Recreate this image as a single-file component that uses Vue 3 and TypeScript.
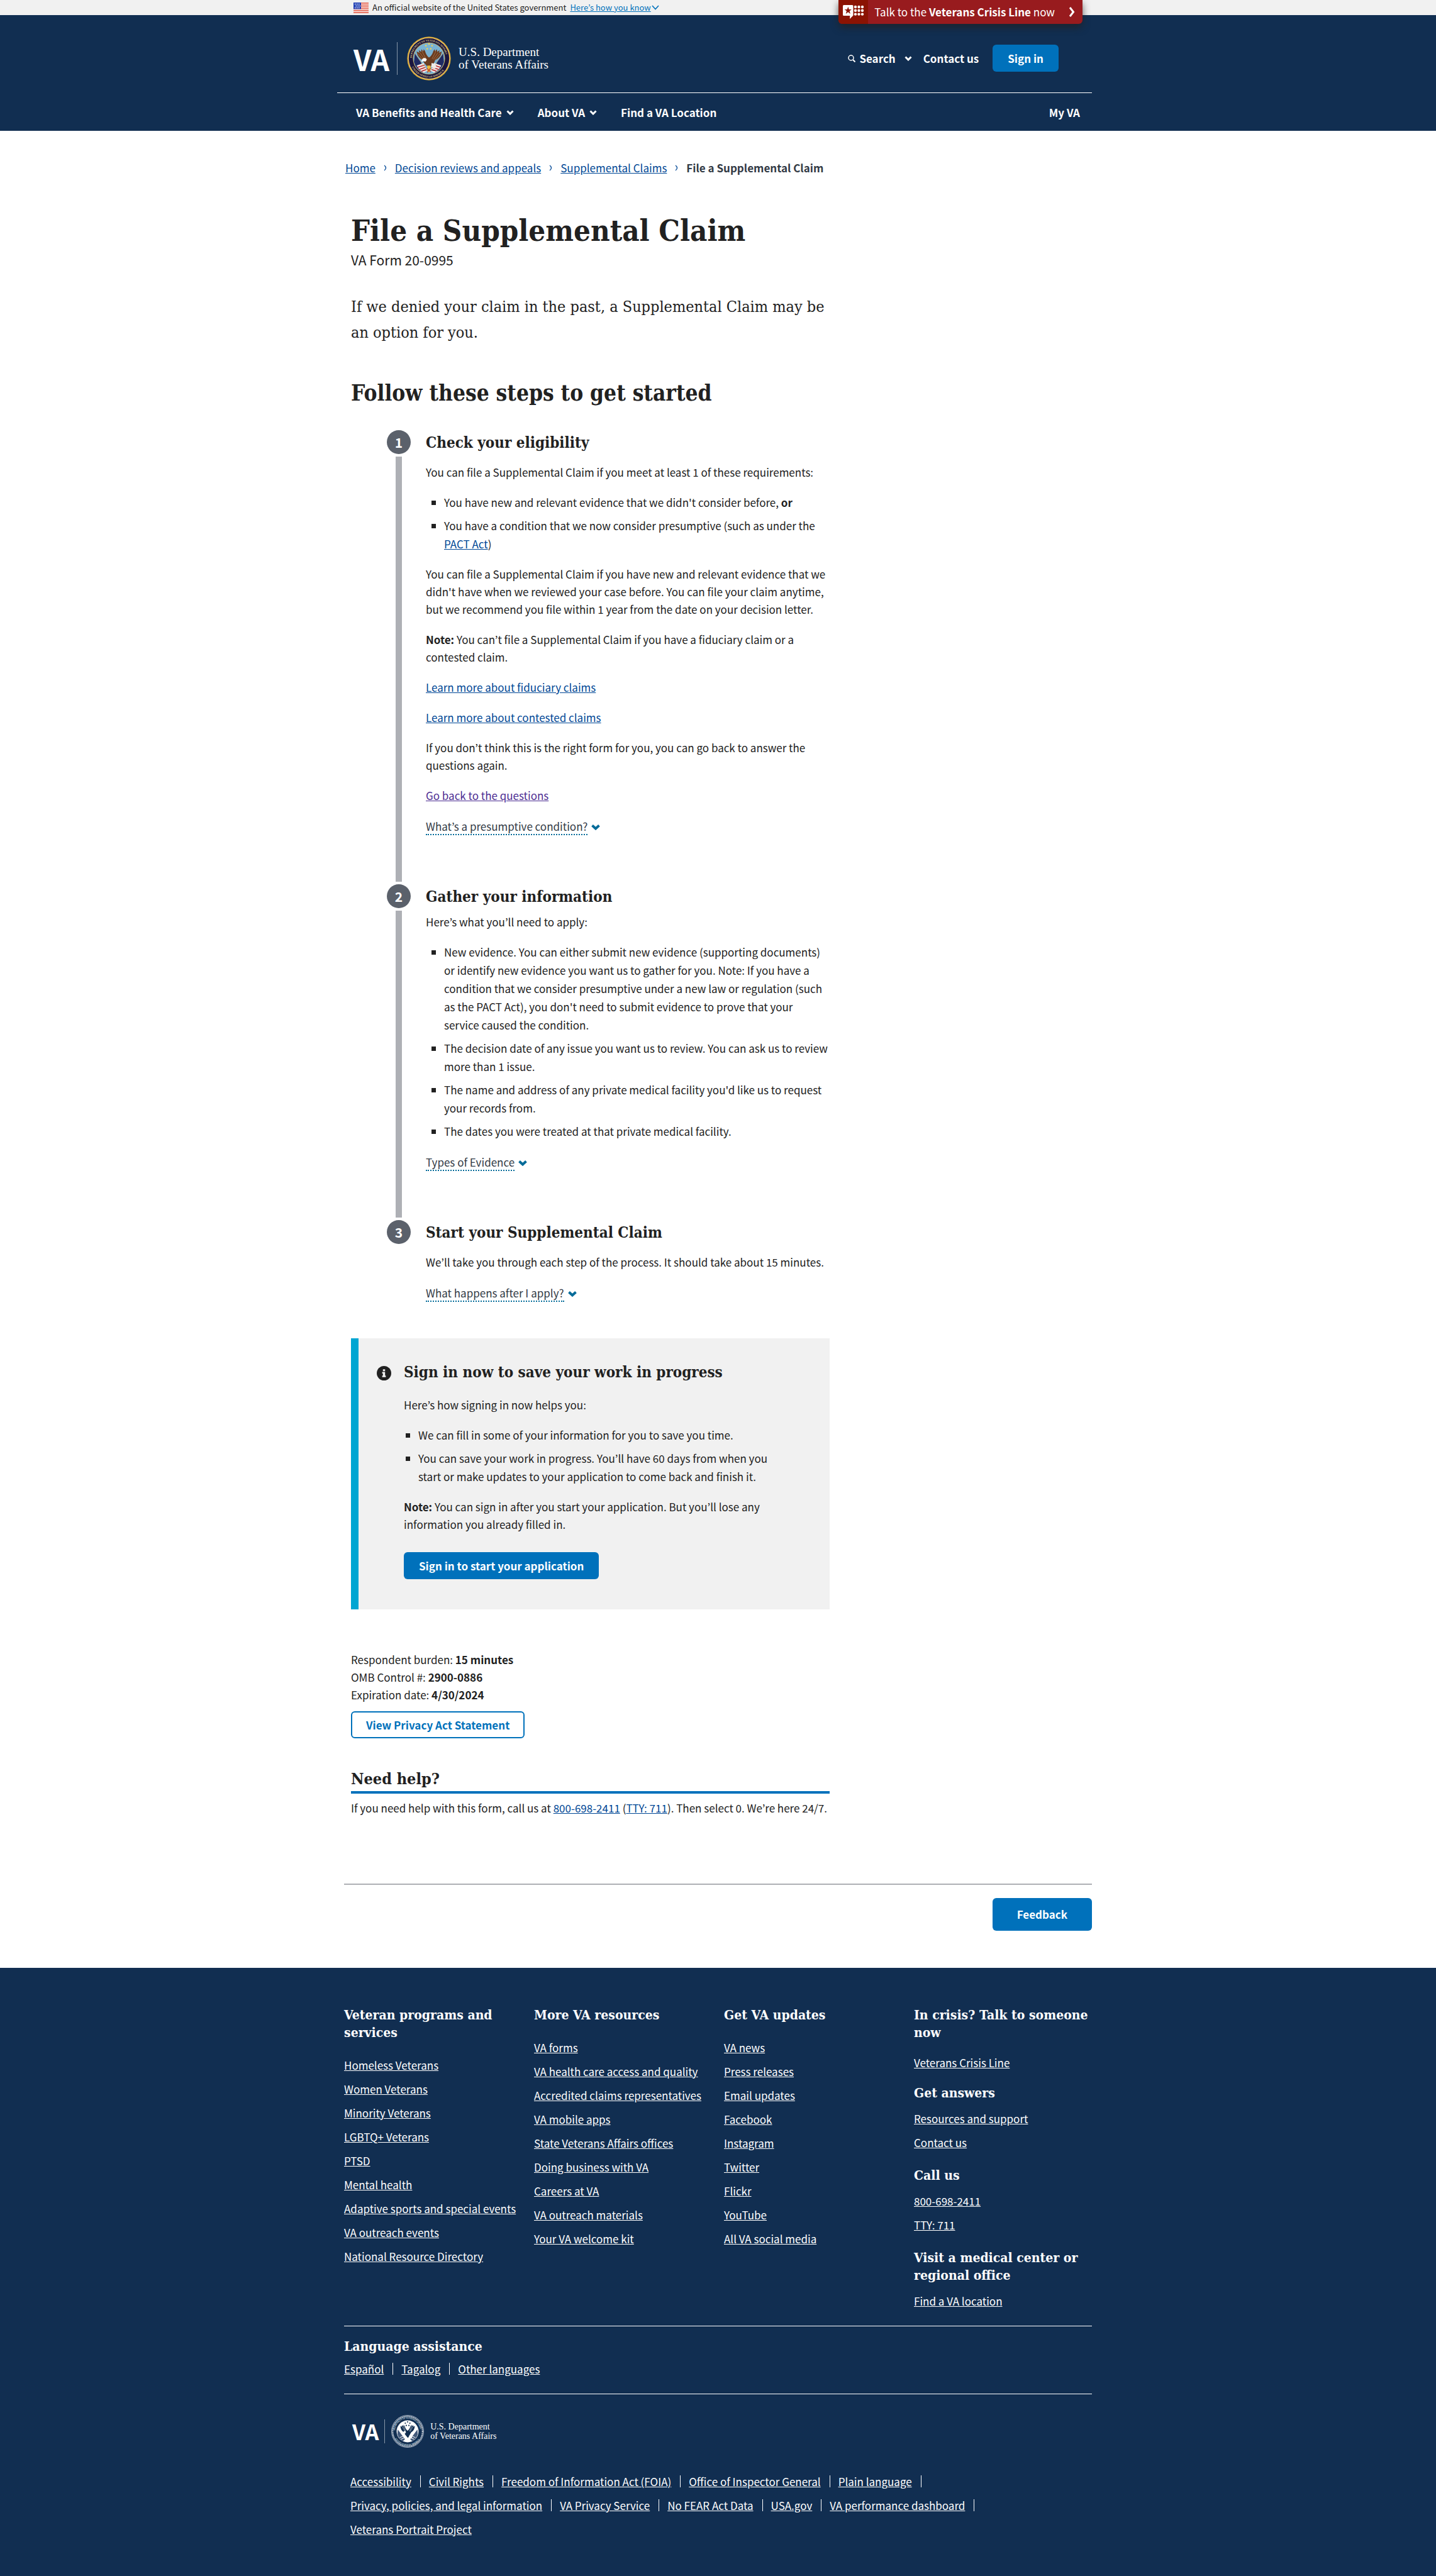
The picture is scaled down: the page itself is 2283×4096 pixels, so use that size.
<script setup lang="ts">
interface FooterGroup {
  title: string
  links: string[]
}

const navItems = [
  { label: 'VA Benefits and Health Care', menu: true },
  { label: 'About VA', menu: true },
  { label: 'Find a VA Location', menu: false },
]

const crumbs = ['Home', 'Decision reviews and appeals', 'Supplemental Claims']

const evidence = [
  'New evidence. You can either submit new evidence (supporting documents) or identify new evidence you want us to gather for you. Note: If you have a condition that we consider presumptive under a new law or regulation (such as the PACT Act), you don\'t need to submit evidence to prove that your service caused the condition.',
  'The decision date of any issue you want us to review. You can ask us to review more than 1 issue.',
  'The name and address of any private medical facility you\'d like us to request your records from.',
  'The dates you were treated at that private medical facility.',
]

const footerColumns: FooterGroup[][] = [
  [
    {
      title: 'Veteran programs and services',
      links: [
        'Homeless Veterans',
        'Women Veterans',
        'Minority Veterans',
        'LGBTQ+ Veterans',
        'PTSD',
        'Mental health',
        'Adaptive sports and special events',
        'VA outreach events',
        'National Resource Directory',
      ],
    },
  ],
  [
    {
      title: 'More VA resources',
      links: [
        'VA forms',
        'VA health care access and quality',
        'Accredited claims representatives',
        'VA mobile apps',
        'State Veterans Affairs offices',
        'Doing business with VA',
        'Careers at VA',
        'VA outreach materials',
        'Your VA welcome kit',
      ],
    },
  ],
  [
    {
      title: 'Get VA updates',
      links: [
        'VA news',
        'Press releases',
        'Email updates',
        'Facebook',
        'Instagram',
        'Twitter',
        'Flickr',
        'YouTube',
        'All VA social media',
      ],
    },
  ],
  [
    { title: 'In crisis? Talk to someone now', links: ['Veterans Crisis Line'] },
    { title: 'Get answers', links: ['Resources and support', 'Contact us'] },
    { title: 'Call us', links: ['800-698-2411', 'TTY: 711'] },
    { title: 'Visit a medical center or regional office', links: ['Find a VA location'] },
  ],
]

const languages = ['Español', 'Tagalog', 'Other languages']

const legalLinks = [
  'Accessibility',
  'Civil Rights',
  'Freedom of Information Act (FOIA)',
  'Office of Inspector General',
  'Plain language',
  'Privacy, policies, and legal information',
  'VA Privacy Service',
  'No FEAR Act Data',
  'USA.gov',
  'VA performance dashboard',
  'Veterans Portrait Project',
]

const stars = [[50, 17], [43, 21], [57, 21], [46, 28], [54, 28]]
const dots = [0, 1, 2, 3, 4, 5, 6, 7, 8]
</script>

<template>
  <div class="page">
    <div class="banner">
      <div class="shell banner-row">
        <svg class="flag" viewBox="0 0 24 17" aria-hidden="true">
          <rect width="24" height="17" fill="#fff" />
          <path d="M0 1h24M0 4h24M0 7h24M0 10h24M0 13h24M0 16h24" stroke="#e0452f" stroke-width="1.5" />
          <rect width="12" height="10.5" fill="#2140b5" />
          <path d="M2 2.5h9M3.5 5.5h8M2 8.5h9" stroke="#fff" stroke-width="1.5" stroke-dasharray="1.5 1.5" />
        </svg>
        <span>An official website of the United States government</span>
        <button type="button" class="how">
          <u>Here’s how you know</u>
          <svg viewBox="0 0 12 8" width="12" height="8" aria-hidden="true"><path d="M1 1l5 5.500L11 1" fill="none" stroke="currentColor" stroke-width="1.6" /></svg>
        </button>
        <a href="#crisis" class="crisis">
          <span class="crisis-icon">
            <svg viewBox="0 0 34 22" width="34" height="22" aria-hidden="true">
              <path d="M1.5 0H15a1.5 1.5 0 0 1 1.5 1.5v14.5a1.5 1.5 0 0 1-1 1.5L11 22l.3-5H1.5A1.5 1.5 0 0 1 0 15.5v-14A1.5 1.5 0 0 1 1.5 0z" fill="#fff" />
              <path d="M8.3 2.8l1.5 4.2h4.2l-3.4 2.6 1.3 4.3-3.6-2.6-3.6 2.6L6 9.6 2.6 7h4.2z" fill="#8b1303" />
              <circle v-for="d in dots" :key="d" :cx="20 + (d % 3) * 5.5" :cy="3 + Math.floor(d / 3) * 5.8" r="2.2" fill="#fff" />
            </svg>
          </span>
          <span class="crisis-text">Talk to the <b>Veterans Crisis Line</b> now</span>
          <svg viewBox="0 0 10 16" width="10" height="16" aria-hidden="true"><path d="M2 1l5.500 7L2 15" fill="none" stroke="#fff" stroke-width="3" /></svg>
        </a>
      </div>
    </div>

    <header class="header">
      <div class="header-shell">
        <div class="brand-row">
          <a href="#home" class="logo" aria-label="VA home">
            <span class="va">VA</span>
            <span class="rule"></span>
            <svg class="seal" viewBox="0 0 100 100" aria-hidden="true">
              <defs>
                <path id="ring-top" d="M11 50a39 39 0 0 1 78 0" />
                <path id="ring-bottom" d="M6.5 50a43.5 43.5 0 0 0 87 0" />
              </defs>
              <circle cx="50" cy="50" r="49.5" fill="#d9a93a" />
              <circle cx="50" cy="50" r="47" fill="#f1d27a" />
              <circle cx="50" cy="50" r="46" fill="#1b1640" />
              <circle cx="50" cy="50" r="36.5" fill="#d9a93a" />
              <circle cx="50" cy="50" r="35.5" fill="#79b2d3" />
              <text class="ring"><textPath href="#ring-top" startOffset="1">DEPARTMENT OF VETERANS AFFAIRS</textPath></text>
              <text class="ring"><textPath href="#ring-bottom" startOffset="20">UNITED STATES OF AMERICA</textPath></text>
              <path d="M18 38L42 73l-5 9A35 35 0 0 1 16 58z" fill="#1f2a63" />
              <path d="M82 38L58 73l5 9A35 35 0 0 0 84 58z" fill="#1f2a63" />
              <path d="M22 66l16-6 8 18-8 4c-7-3-12-8-16-16zM78 66l-16-6-8 18 8 4c7-3 12-8 16-16z" fill="#f3e9e6" />
              <path d="M24 70l16-5M28 75l14-5M33 79l11-4M76 70l-16-5M72 75l-14-5M67 79l-11-4" stroke="#b9282e" stroke-width="2.4" />
              <path d="M18 38l24 35M82 38L58 73" stroke="#d9c07a" stroke-width="1" />
              <path d="M50 48c-4-3-7-8-9-15l-3-4-1 5-4-5-1 6-5-4 1 6-6-3c1 9 6 16 14 20l3 6 8 9 3 1 4-1 8-10 2-5c9-4 14-11 15-20l-6 3 1-6-5 4-1-6-4 5-1-5-3 4c-2 7-5 12-10 15z" fill="#6b3c20" />
              <path d="M29 36l11 16M34 33l9 18M24 38l13 16M71 36L60 52M66 33l-9 18M76 38L63 54" stroke="#a8754a" stroke-width="1.2" />
              <path d="M36 50c4-2 8-1 9 3l-3 4-5-1-4 2c0-3 1-6 3-8z" fill="#fff" />
              <path d="M56 60l8 3 4 8-6 2-7-4z" fill="#efece8" />
              <path d="M46 66h7l2 7-4 9-5-3z" fill="#e9bd3c" />
              <path d="M45 72l9 9M54 71l-8 11" stroke="#b9282e" stroke-width="1.5" />
              <circle v-for="(s, i) in stars" :key="i" :cx="s[0]" :cy="s[1]" r="2" fill="#e6cf5d" />
            </svg>
            <span class="dept">U.S. Department<br />of Veterans Affairs</span>
          </a>
          <div class="tools">
            <button type="button" class="tool">
              <svg viewBox="0 0 12 12" width="12" height="12" aria-hidden="true"><circle cx="5" cy="5" r="4" fill="none" stroke="#fff" stroke-width="1.5" /><path d="M8 8l3.500 3.500" stroke="#fff" stroke-width="2" /></svg>
              <span class="search-label">Search</span>
              <svg class="chev" viewBox="0 0 12 8" aria-hidden="true"><path d="M1.5 1.5L6 6l4.5-4.5" /></svg>
            </button>
            <a href="#contact" class="contact">Contact us</a>
            <button type="button" class="btn">Sign in</button>
          </div>
        </div>
        <nav class="nav" aria-label="Primary">
          <template v-for="item in navItems" :key="item.label">
            <button v-if="item.menu" type="button">
              {{ item.label }}
              <svg class="chev" viewBox="0 0 12 8" aria-hidden="true"><path d="M1.5 1.5L6 6l4.5-4.5" /></svg>
            </button>
            <a v-else href="#find">{{ item.label }}</a>
          </template>
          <a href="#my-va" class="my-va">My VA</a>
        </nav>
      </div>
    </header>

    <main class="shell">
      <nav class="crumbs" aria-label="Breadcrumb">
        <template v-for="crumb in crumbs" :key="crumb">
          <a href="#crumb">{{ crumb }}</a>
          <svg viewBox="0 0 5 10" width="5" height="10" aria-hidden="true"><path d="M1 1c2 1.500 2.500 3 2.500 4S3 7.500 1 9" fill="none" stroke="#004795" stroke-width="1.3" /></svg>
        </template>
        <strong>File a Supplemental Claim</strong>
      </nav>

      <article class="content">
        <h1>File a Supplemental Claim</h1>
        <p class="form-no">VA Form 20-0995</p>
        <p class="intro">If we denied your claim in the past, a Supplemental Claim may be an option for you.</p>
        <h2>Follow these steps to get started</h2>

        <ol class="steps">
          <li class="step">
            <div class="marker"><span class="num">1</span><span class="bar"></span></div>
            <div class="body">
              <h3>Check your eligibility</h3>
              <p>You can file a Supplemental Claim if you meet at least 1 of these requirements:</p>
              <ul>
                <li>You have new and relevant evidence that we didn't consider before, <b>or</b></li>
                <li>You have a condition that we now consider presumptive (such as under the <a href="#pact">PACT Act</a>)</li>
              </ul>
              <p>You can file a Supplemental Claim if you have new and relevant evidence that we didn't have when we reviewed your case before. You can file your claim anytime, but we recommend you file within 1 year from the date on your decision letter.</p>
              <p><b>Note:</b> You can’t file a Supplemental Claim if you have a fiduciary claim or a contested claim.</p>
              <p><a href="#fiduciary">Learn more about fiduciary claims</a></p>
              <p><a href="#contested">Learn more about contested claims</a></p>
              <p>If you don’t think this is the right form for you, you can go back to answer the questions again.</p>
              <p><a href="#questions" class="visited">Go back to the questions</a></p>
              <button type="button" class="expand">
                <span>What’s a presumptive condition?</span>
                <svg viewBox="0 0 14 9" width="14" height="9" aria-hidden="true"><path d="M1.5 1.5L7 6.5l5.5-5" /></svg>
              </button>
            </div>
          </li>
          <li class="step">
            <div class="marker"><span class="num">2</span><span class="bar"></span></div>
            <div class="body tight">
              <h3>Gather your information</h3>
              <p>Here’s what you’ll need to apply:</p>
              <ul>
                <li v-for="line in evidence" :key="line">{{ line }}</li>
              </ul>
              <button type="button" class="expand">
                <span>Types of Evidence</span>
                <svg viewBox="0 0 14 9" width="14" height="9" aria-hidden="true"><path d="M1.5 1.5L7 6.5l5.5-5" /></svg>
              </button>
            </div>
          </li>
          <li class="step">
            <div class="marker"><span class="num">3</span></div>
            <div class="body last">
              <h3>Start your Supplemental Claim</h3>
              <p>We’ll take you through each step of the process. It should take about 15 minutes.</p>
              <button type="button" class="expand">
                <span>What happens after I apply?</span>
                <svg viewBox="0 0 14 9" width="14" height="9" aria-hidden="true"><path d="M1.5 1.5L7 6.5l5.5-5" /></svg>
              </button>
            </div>
          </li>
        </ol>

        <section class="alert">
          <svg class="info" viewBox="0 0 24 24" aria-hidden="true">
            <circle cx="12" cy="12" r="12" fill="#212121" />
            <path d="M10.2 5.5h3.6v3h-3.6zM9 10h4.8v6H15v2.500H9V16h1.200v-3.500H9z" fill="#f1f1f1" />
          </svg>
          <div>
            <h3>Sign in now to save your work in progress</h3>
            <p>Here’s how signing in now helps you:</p>
            <ul>
              <li>We can fill in some of your information for you to save you time.</li>
              <li>You can save your work in progress. You’ll have 60 days from when you start or make updates to your application to come back and finish it.</li>
            </ul>
            <p><b>Note:</b> You can sign in after you start your application. But you’ll lose any information you already filled in.</p>
            <button type="button" class="btn start">Sign in to start your application</button>
          </div>
        </section>

        <div class="omb">
          <div>Respondent burden: <b>15 minutes</b></div>
          <div>OMB Control #: <b>2900-0886</b></div>
          <div>Expiration date: <b>4/30/2024</b></div>
          <button type="button" class="btn outline">View Privacy Act Statement</button>
        </div>

        <h2 class="help">Need help?</h2>
        <p class="help-text">If you need help with this form, call us at <a href="tel:8006982411">800-698-2411</a> (<a href="tel:711">TTY: 711</a>). Then select 0. We’re here 24/7.</p>
      </article>

      <div class="feedback">
        <button type="button" class="btn large">Feedback</button>
      </div>
    </main>

    <footer class="footer">
      <div class="shell">
        <div class="columns">
          <div v-for="(column, i) in footerColumns" :key="i" class="column">
            <section v-for="group in column" :key="group.title">
              <h2>{{ group.title }}</h2>
              <ul>
                <li v-for="link in group.links" :key="link"><a href="#footer">{{ link }}</a></li>
              </ul>
            </section>
          </div>
        </div>

        <section class="language">
          <h2>Language assistance</h2>
          <ul class="inline">
            <li v-for="language in languages" :key="language"><a href="#language">{{ language }}</a></li>
          </ul>
        </section>

        <a href="#home" class="logo small" aria-label="VA home">
          <span class="va">VA</span>
          <span class="rule"></span>
          <svg class="seal" viewBox="0 0 100 100" aria-hidden="true">
            <circle cx="50" cy="50" r="49" fill="none" stroke="#dfe5ec" stroke-width="1.5" />
            <circle cx="50" cy="50" r="45.5" fill="none" stroke="#dfe5ec" stroke-width="3.5" stroke-dasharray="2 1" />
            <circle cx="50" cy="50" r="33.5" fill="#fff" />
            <text class="ring mono"><textPath href="#ring-top" startOffset="3">DEPARTMENT OF VETERANS AFFAIRS</textPath></text>
            <text class="ring mono"><textPath href="#ring-bottom" startOffset="23">UNITED STATES OF AMERICA</textPath></text>
            <path d="M20 44l22 30-6 6A33 33 0 0 1 19 58zM80 44L58 74l6 6A33 33 0 0 0 81 58z" fill="#43597a" />
            <path d="M26 69l13-5M30 74l12-5M74 69l-13-5M70 74l-12-5" stroke="#fff" stroke-width="2" />
            <path d="M50 48c-4-3-7-8-9-14l-3-4-1 5-4-4-1 5-4-3c0 9 4 16 11 20l3 6 8 10h2l6-11 3-5c7-4 11-11 11-20l-4 3-1-5-4 4-1-5-3 4c-2 6-5 11-9 14z" fill="#112e51" />
            <path d="M34 36l8 14M38 34l6 16M66 36l-8 14M62 34l-6 16" stroke="#fff" stroke-width="1" />
            <path d="M38 50c4-2 7 0 7 3l-3 4-5-1zM55 62l7 3 2 6-6 1z" fill="#fff" />
            <circle v-for="(s, i) in stars" :key="i" :cx="s[0]" :cy="(s[1] ?? 0) + 4" r="2" fill="#112e51" />
          </svg>
          <span class="dept">U.S. Department<br />of Veterans Affairs</span>
        </a>

        <ul class="inline legal">
          <li v-for="link in legalLinks" :key="link"><a href="#legal">{{ link }}</a></li>
        </ul>
      </div>
    </footer>
  </div>
</template>

<style>
body {
  background: #fff;
}
</style>

<style scoped>
.page {
  --sans: "Noto Sans CJK KR", "Noto Sans", sans-serif;
  --slab: "DejaVu Serif Condensed", "DejaVu Serif", serif;
  --navy: #112e51;
  --blue: #0071bb;
  --link: #004795;
  min-height: 100vh;
  display: flex;
  flex-direction: column;
  font: 17px/28px var(--sans);
  color: #212121;
  background: #fff;
}

.page * {
  box-sizing: border-box;
}

h1, h2, h3, p, ul, ol {
  margin: 0;
  padding: 0;
}

h1, h2, h3 {
  font-family: var(--slab);
  font-weight: 700;
}

button {
  font: inherit;
  color: inherit;
  background: none;
  border: 0;
  padding: 0;
  cursor: pointer;
}

a {
  color: var(--link);
}

.shell {
  width: 100%;
  max-width: 1189px;
  margin: 0 auto;
}

.banner {
  background: #f1f1f1;
  font-size: 13px;
  line-height: 18px;
}

.banner-row {
  position: relative;
  display: flex;
  align-items: center;
  gap: 6px;
  height: 24px;
  padding-left: 15px;
}

.flag {
  width: 24px;
  height: 17px;
}

.how {
  display: flex;
  align-items: center;
  gap: 1px;
  color: var(--blue);
}

.crisis {
  position: absolute;
  top: 0;
  right: 15px;
  z-index: 1;
  display: flex;
  align-items: center;
  height: 38px;
  padding-right: 12px;
  overflow: hidden;
  border-radius: 0 0 6px 6px;
  background: #981b1e;
  color: #fff;
  font-size: 17px;
  line-height: 28px;
  text-decoration: none;
  box-shadow: 0 6px 12px rgba(33, 33, 33, 0.7);
}

.crisis-icon {
  display: flex;
  align-items: center;
  align-self: stretch;
  padding: 0 6px 0 7px;
  background: #8b1303;
}

.crisis-text {
  margin: 0 22px 0 10px;
}

.header {
  background: var(--navy);
  color: #fff;
  font-weight: 700;
}

.header-shell {
  max-width: 1211px;
  margin: 0 auto;
  padding-right: 11px;
}

.header a {
  color: #fff;
  text-decoration: none;
}

.brand-row {
  display: flex;
  align-items: center;
  justify-content: space-between;
  height: 124px;
  padding: 14px 53px 0 26px;
  border-bottom: 1px solid #fff;
}

.logo {
  display: flex;
  align-items: center;
  color: #fff;
  text-decoration: none;
}

.va {
  font-size: 46px;
  line-height: 48px;
  font-weight: 700;
}

.rule {
  width: 1px;
  height: 52px;
  margin: 0 15px 0 12px;
  background: #8796a8;
}

.seal {
  width: 70px;
  height: 70px;
}

.ring {
  font: 700 6px "Liberation Serif", serif;
  fill: #d9c07a;
}

.ring.mono {
  fill: #dfe5ec;
}

.dept {
  margin-left: 12px;
  font: 400 19px/20px "Liberation Serif", serif;
}

.tools,
.tool {
  display: flex;
  align-items: center;
}

.search-label {
  margin: 0 14px 0 6px;
}

.chev {
  width: 12px;
  height: 8px;
  fill: none;
  stroke: #fff;
  stroke-width: 3;
}

.contact {
  margin: 0 22px 0 18px;
}

.btn {
  height: 43px;
  padding: 0 24px;
  border-radius: 6px;
  background: var(--blue);
  color: #fff;
  font-weight: 700;
}

.nav {
  display: flex;
  align-items: center;
  gap: 38px;
  height: 60px;
  padding: 2px 19px 0 30px;
}

.nav button {
  display: flex;
  align-items: center;
  gap: 7px;
}

.my-va {
  margin-left: auto;
}

.crumbs {
  display: flex;
  align-items: center;
  gap: 13px;
  padding: 45px 0 0 2px;
}

.crumbs strong {
  color: #323a45;
}

.content {
  max-width: 772px;
  padding: 0 0 0 11px;
}

h1 {
  margin-top: 58px;
  font-size: 47px;
  line-height: 56px;
}

.form-no {
  margin-top: 4px;
  font-size: 21px;
}

.intro {
  margin-top: 40px;
  font: 25px/41px var(--slab);
}

.content h2 {
  margin-top: 54px;
  font-size: 35px;
  line-height: 44px;
}

h3 {
  font-size: 24px;
  line-height: 30px;
}

.steps {
  margin-top: 37px;
  padding-left: 57px;
  list-style: none;
}

.step {
  display: grid;
  grid-template-columns: 38px 1fr;
  column-gap: 24px;
}

.marker {
  display: flex;
  flex-direction: column;
  align-items: center;
  gap: 4px;
}

.num {
  width: 38px;
  height: 38px;
  border-radius: 50%;
  background: #5b616b;
  color: #fff;
  font-size: 21px;
  line-height: 38px;
  font-weight: 700;
  text-align: center;
}

.bar {
  flex: 1;
  width: 10px;
  margin-bottom: 4px;
  background: #aeb0b5;
}

.body {
  padding: 5px 0 78px;
}

.body.last {
  padding-bottom: 0;
}

.body p,
.alert p {
  margin-top: 20px;
}

.body h3 + p {
  margin-top: 18px;
}

.body.tight h3 + p {
  margin-top: 11px;
}

.alert h3 + p {
  margin-top: 23px;
}

.body ul,
.alert ul {
  margin-top: 19px;
  padding-left: 29px;
  list-style: square;
  line-height: 29px;
}

.alert ul {
  padding-left: 23px;
}

.body li + li,
.alert li + li {
  margin-top: 8px;
}

.visited {
  color: #4c2c92;
}

.expand {
  display: flex;
  align-items: center;
  gap: 6px;
  margin-top: 24px;
  color: #323a45;
  line-height: 22px;
}

.expand span {
  padding-bottom: 1px;
  border-bottom: 2px dotted #046b99;
}

.expand path {
  fill: none;
  stroke: #046b99;
  stroke-width: 4;
}

.alert {
  display: flex;
  align-items: flex-start;
  gap: 20px;
  margin-top: 58px;
  padding: 39px 70px 48px 29px;
  border-left: 12px solid #00a6d2;
  background: #f1f1f1;
}

.info {
  flex: none;
  width: 23px;
  height: 23px;
  margin-top: 5px;
}

.start {
  margin-top: 30px;
}

.omb {
  margin-top: 66px;
}

.outline {
  margin-top: 12px;
  padding: 0 22px;
  border: 2px solid var(--blue);
  background: #fff;
  color: var(--blue);
}

.content .help {
  margin-top: 50px;
  padding-bottom: 4px;
  border-bottom: 4px solid var(--blue);
  font-size: 25px;
  line-height: 30px;
}

.help-text {
  margin-top: 9px;
}

.feedback {
  display: flex;
  justify-content: flex-end;
  margin: 106px 0 59px;
  padding-top: 21px;
  border-top: 2px solid #aeb0b5;
}

.large {
  height: 52px;
  padding: 0 39px;
}

.footer {
  flex: 1;
  padding: 61px 0 58px;
  background: var(--navy);
  color: #fff;
}

.footer a {
  color: #fff;
}

.footer h2 {
  font-size: 21px;
  line-height: 28px;
}

.footer ul {
  list-style: none;
}

.columns {
  display: grid;
  grid-template-columns: 302fr 302fr 302fr 283fr;
}

.column ul {
  display: grid;
  gap: 10px;
  margin-top: 24px;
}

.column section + section {
  margin-top: 24px;
}

.column section + section ul {
  margin-top: 13px;
}

.column:last-child section:first-child ul {
  margin-top: 20px;
}

.column:last-child section:nth-child(2) {
  margin-top: 20px;
}

.language {
  margin-top: 25px;
  padding: 18px 0 25px;
  border: solid #fff;
  border-width: 1px 0;
}

.inline {
  display: flex;
  flex-wrap: wrap;
  row-gap: 19px;
  margin-top: 12px;
  line-height: 19px;
}

.inline li {
  padding-right: 14px;
  margin-right: 13px;
  border-right: 1px solid #fff;
}

.inline li:last-child {
  border-right: 0;
}

.language .inline {
  padding-bottom: 5px;
}

.footer .small {
  margin-top: 33px;
  padding-left: 13px;
  text-decoration: none;
}

.small .va {
  font-size: 34px;
}

.small .rule {
  height: 38px;
  margin: 0 10px 0 9px;
}

.small .seal {
  width: 52px;
  height: 52px;
}

.small .dept {
  margin-left: 10px;
  font-size: 14px;
  line-height: 15px;
}

.legal {
  margin-top: 44px;
  padding-left: 10px;
}
</style>
